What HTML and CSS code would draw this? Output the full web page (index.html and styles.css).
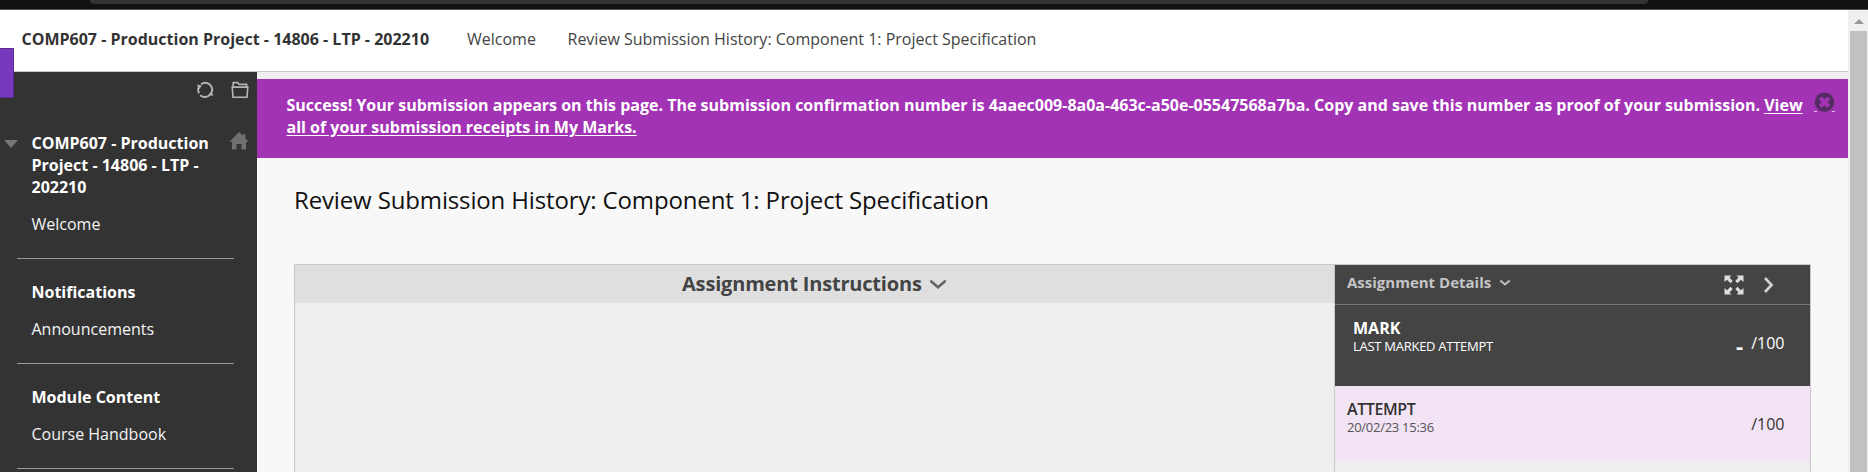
FILE: index.html
```html
<!DOCTYPE html>
<html lang="en">
<head>
<meta charset="utf-8">
<title>Review Submission History</title>
<link rel="stylesheet" href="styles.css">
</head>
<body>
<div class="browser-edge"><div class="address-bar"></div></div>
<div class="viewport">
  <div class="page">
    <header class="breadcrumbs">
      <span class="crumb-course">COMP607 - Production Project - 14806 - LTP - 202210</span>
      <span class="crumb-welcome">Welcome</span>
      <span class="crumb-current">Review Submission History: Component 1: Project Specification</span>
    </header>
    <div class="columns">
      <nav class="sidebar">
        <div class="tools">
          <svg width="18" height="18" viewBox="0 0 18 18"><g fill="none" stroke="#b5b5b5" stroke-width="1.9"><path d="M3.200 12.300A7 7 0 0 1 3.600 4.500M5 3.200A7 7 0 0 1 15.600 11.500M14.300 13.500A7 7 0 0 1 4.200 14.200"/></g><path fill="#b5b5b5" d="M.8 3.600l5 .8-2.600 3.800zM17.400 14.700l-5-.8 2.800-3.900z"/></svg>
          <svg width="18" height="18" viewBox="0 0 18 18" fill="none" stroke="#b5b5b5" stroke-width="1.6"><path d="M2.200 5.800V1.600h4.600l1.400 1.800h7.400v2.400M1.200 6.100h15.600l-.8 10.100H2z"/></svg>
        </div>
        <section class="menu-group course-group">
          <span class="menu-arrow"></span>
          <svg class="home" width="20" height="18" viewBox="0 0 20 18"><path fill="#707070" d="M10 0l4 3.800V2.200h2.400v4L19.700 10H17v7.500h-4.500V12h-5v5.500H3V10H.3z"/></svg>
          <h3>COMP607 - Production<br>Project - 14806 - LTP -<br>202210</h3>
          <a>Welcome</a>
        </section>
        <section class="menu-group"><h3>Notifications</h3><a>Announcements</a></section>
        <section class="menu-group last-group"><h3>Module Content</h3><a>Course Handbook</a></section>
      </nav>
      <main class="content">
        <div class="receipt">
          <p><span>Success! Your submission appears on this page. The submission confirmation number is 4aaec009-8a0a-463c-a50e-05547568a7ba. Copy and save this number as proof of your submission. <u>View</u></span><br><u>all of your submission receipts in My Marks.</u></p>
          <svg class="close" width="22" height="22" viewBox="0 0 22 22"><path d="M0 19.500h3M18 19.500h3" stroke="#e3c4e8"/><circle cx="10.500" cy="10.200" r="9.700" fill="#542c62"/><path d="M6.200 5.900l8.600 8.600M14.800 5.900l-8.600 8.600" stroke="#a333b5" stroke-width="4"/></svg>
        </div>
        <h1>Review Submission History: Component 1: Project Specification</h1>
        <div class="assignment">
          <section class="instructions">
            <h2><span>Assignment Instructions</span><svg width="16" height="10" viewBox="0 0 16 10"><path d="M1.300 1.500L8 7.300l6.700-5.800" fill="none" stroke="#666" stroke-width="2.700" stroke-linecap="round"/></svg></h2>
          </section>
          <aside class="details">
            <div class="details-bar">
              <h2>Assignment Details</h2>
              <svg class="details-caret" width="12" height="8" viewBox="0 0 12 8"><path d="M1.300 1.500L6 5.500l4.700-4" fill="none" stroke="#c0c0c0" stroke-width="2"/></svg>
              <svg class="expand" width="20" height="20" viewBox="0 0 20 20"><g fill="#dedede"><path d="M.5.500h7L5.500 2.500 8.700 6 6.500 8.200 3 4.800.5 7z"/><path d="M19.500.500v6.500L17 4.800l-3.500 3.400L11.300 6l3.200-3.500-2-2z"/><path d="M.5 19.500h7l-2-2L8.700 14l-2.200-2.200L3 15.200.5 13z"/><path d="M19.500 19.500V13L17 15.200l-3.500-3.400L11.300 14l3.200 3.500-2 2z"/></g></svg>
              <svg class="next" width="12" height="18" viewBox="0 0 12 18"><path d="M2 2l6.600 7L2 16" fill="none" stroke="#d2d2d2" stroke-width="2.600"/></svg>
            </div>
            <div class="mark">
              <div><strong>MARK</strong><small>LAST MARKED ATTEMPT</small></div>
              <div class="score"><b>-</b><span>/100</span></div>
            </div>
            <div class="attempt">
              <div><strong>ATTEMPT</strong><small>20/02/23 15:36</small></div>
              <div class="score"><span>/100</span></div>
            </div>
          </aside>
        </div>
      </main>
    </div>
  </div>
  <div class="scrollbar"><div class="scroll-up"></div><div class="scroll-thumb"></div></div>
</div>
<div class="side-tab"></div>
</body>
</html>
```
FILE: styles.css
```css
* { box-sizing: border-box; }
body { margin: 0; height: 472px; overflow: hidden; font: 16px/22px "Open Sans", sans-serif; background: #f8f8f8; }
h1, h2, h3, p { margin: 0; }
svg { display: block; flex: none; }
span, u, a, small, strong, h1, h2, h3 { white-space: nowrap; }

.browser-edge { height: 10px; background: #111; border-bottom: 1px solid #555; padding-left: 90px; }
.address-bar { width: 1558px; height: 4px; background: #333; border-radius: 0 0 10px 10px; }
.viewport { display: flex; height: 462px; }
.page { width: 1848px; }

.breadcrumbs { display: flex; height: 62px; padding: 18px 0 0 21.5px; background: #fff; border-bottom: 1px solid #c8ccc8; color: #333; }
.crumb-course { width: 445.5px; font-weight: 700; }
.crumb-welcome { width: 100.5px; color: #444; }
.crumb-current { color: #444; }

.columns { display: flex; height: 400px; }
.sidebar { width: 257px; flex: none; background: #333; color: #fff; }
.tools { display: flex; justify-content: flex-end; gap: 17px; height: 60px; padding: 9px 8.5px 0 0; }
.menu-group { position: relative; margin: 0 23px 22px 17px; padding: 0 0 23px 14.5px; border-bottom: 1px solid #999; }
.last-group { margin-bottom: 0; }
.menu-group h3 { font-size: 16px; font-weight: 700; margin-bottom: 15px; }
.menu-group a { display: block; color: #f3f3f3; }
.menu-arrow { position: absolute; left: -13px; top: 8px; border: 7px solid transparent; border-top: 8px solid #777; border-bottom: 0; }
.home { position: absolute; left: 212px; top: 0; }

.content { flex: 1; background: #f8f8f8; border-top: 7px solid #eee; }
.receipt { display: flex; height: 79px; padding: 15px 0 0 29.5px; background: #a333b5; color: #fff; font-weight: 700; }
.receipt p { width: 1527px; }
.receipt u { text-underline-offset: 2px; }
.close { margin-top: -2px; }
h1 { margin: 25px 0 0 37px; font-size: 24px; line-height: 34px; font-weight: 400; letter-spacing: -0.14px; color: #111; }

.assignment { display: flex; width: 1517px; height: 208px; margin: 47px 0 0 37px; border: 1px solid #c8c8c8; border-bottom: 0; background: #eee; }
.instructions { width: 1039px; }
.instructions h2 { display: flex; gap: 8px; height: 38px; padding: 7px 0 0 387px; background: #dfdfdf; color: #444; font-size: 20px; line-height: 24px; font-weight: 700; letter-spacing: -0.18px; }
.instructions h2 span { width: 240px; }
.instructions h2 svg { margin-top: 8px; }
.details { flex: 1; border-left: 1px solid #c8c8c8; }
.details-bar { display: flex; height: 40px; background: #444; border-bottom: 1px solid #777; padding-left: 12px; }
.details-bar h2 { width: 152px; padding-top: 6px; font-size: 15px; line-height: 22px; font-weight: 700; color: #c5c5c5; }
.details-caret { margin-top: 14px; }
.expand { margin: 10px 0 0 212.5px; }
.next { margin: 11px 0 0 19px; }
.mark, .attempt { display: flex; justify-content: space-between; }
.mark { height: 81px; padding: 12px 25.5px 0 18px; background: #444; color: #fff; }
.attempt { height: 75px; padding: 12px 25.5px 0 12px; background: #f2e3f5; color: #333; }
.mark strong, .mark small, .attempt strong, .attempt small { display: block; }
.mark strong { font-size: 16px; font-weight: 700; }
.attempt strong { font-size: 16px; font-weight: 600; letter-spacing: -0.4px; }
small { margin-top: -1px; font-size: 13px; line-height: 16px; letter-spacing: -0.27px; }
.attempt small { color: #555; }
.score { display: flex; gap: 8px; padding-top: 15px; }
.mark b { font-size: 22px; line-height: 26px; }

.scrollbar { width: 20px; background: #f0f0f0; padding: 9px 1px 0 2px; }
.scroll-up { width: 0; margin-left: 4px; border: 5px solid transparent; border-top: 0; border-bottom-color: #999; }
.scroll-thumb { height: 441px; margin-top: 7px; background: #c1c1c1; }
.side-tab { position: absolute; left: 0; top: 48px; width: 14px; height: 50px; background: #7838bd; border: 1px solid #5c2d91; border-left: 0; }
```
